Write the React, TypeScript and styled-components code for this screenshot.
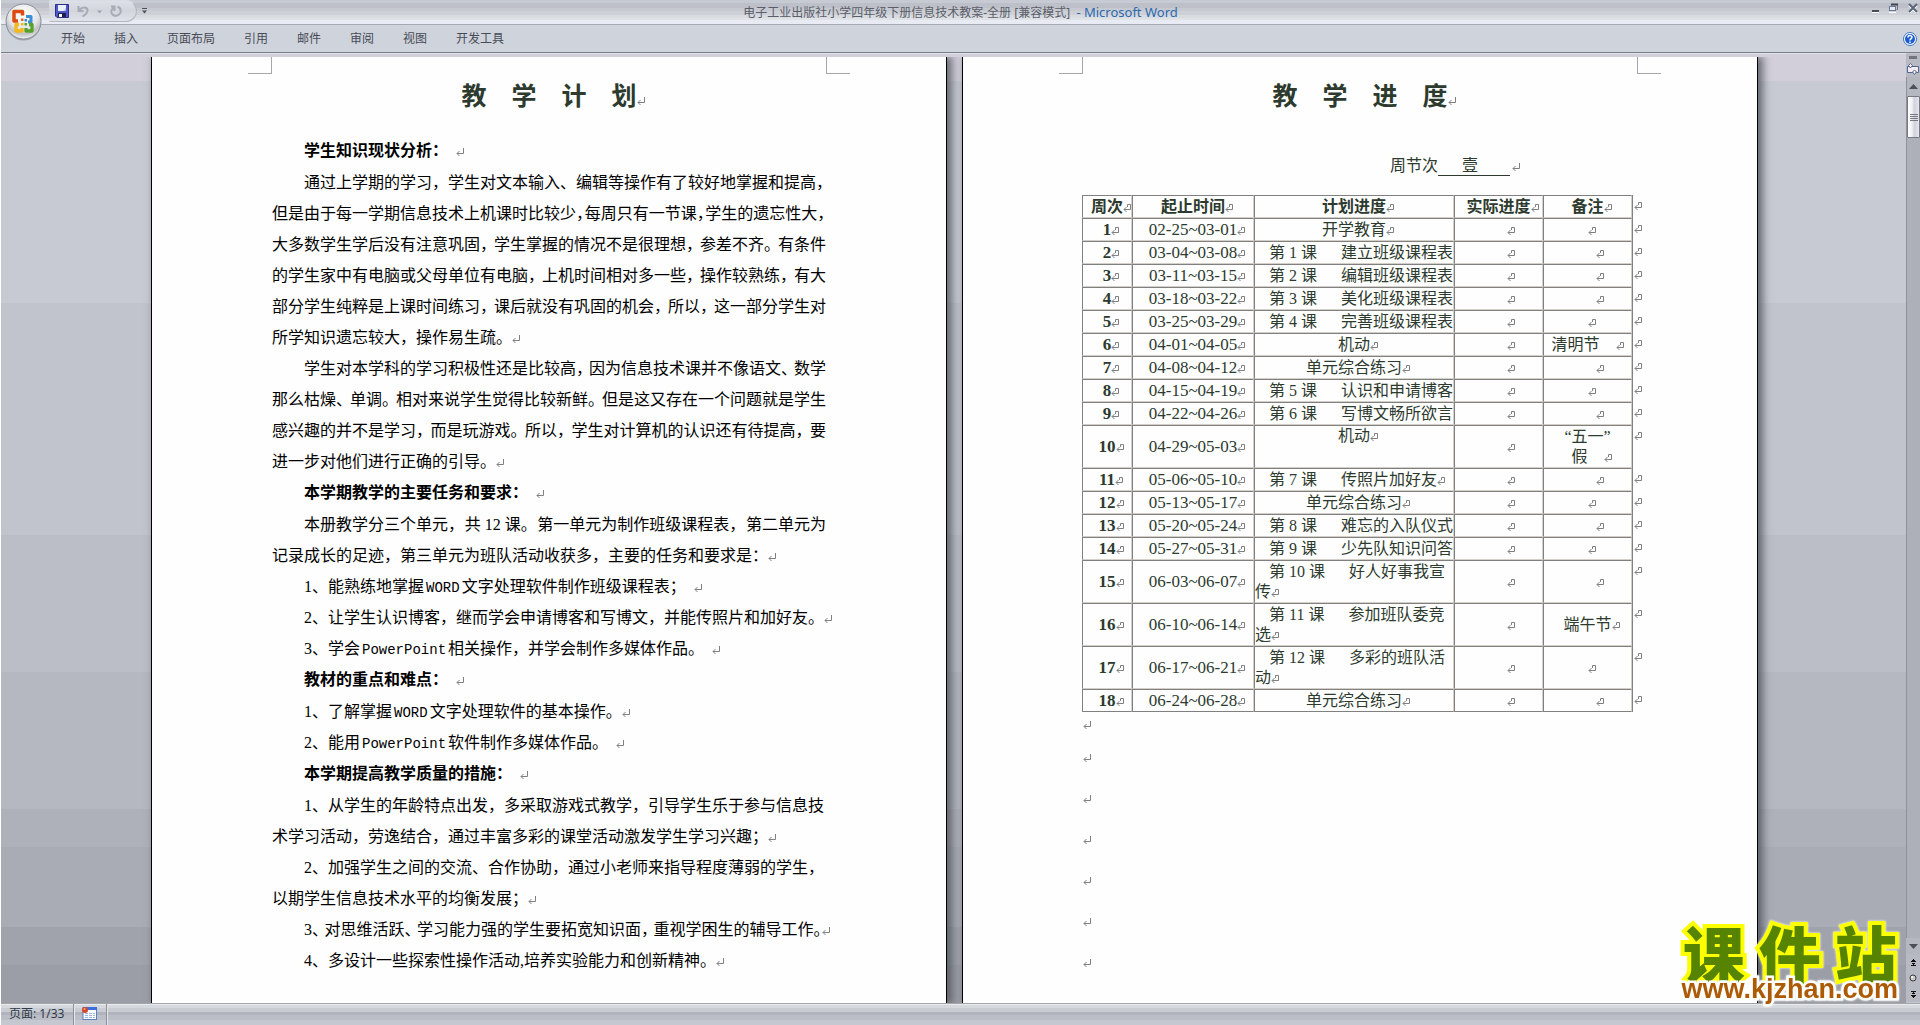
import React from "react";
import styled, { createGlobalStyle, css } from "styled-components";

const GlobalStyle = createGlobalStyle`
  * { box-sizing: border-box; }
  html, body { margin: 0; padding: 0; overflow: hidden; }
  body { background: #d2cfda; }
  button { border: 0; padding: 0; margin: 0; background: none; font: inherit; color: inherit; }
`;

const uiFont = `"Noto Sans", "Noto Sans CJK SC", sans-serif`;
const docFont = `"Liberation Serif", "Noto Sans CJK SC", serif`;
const ink = "#2d3a2e";

/* ---------- window frame ---------- */

const Window = styled.div`
  position: relative;
  display: grid;
  grid-template-rows: auto auto minmax(0, 1fr) auto;
  height: 100vh;
  border-left: 1px solid #ffffff;
  font-family: ${uiFont};
  font-size: 12px;
`;

const TitleBar = styled.header`
  display: grid;
  grid-template-columns: 1fr auto 1fr;
  align-items: start;
  height: 25px;
  border-bottom: 1px solid #a7aab2;
  background: linear-gradient(
    #c6cad3 0 3px, #bdc0c8 3px 8px, #c6c9d0 8px 11px, #cdd0d7 11px 15px,
    #d8dbe0 15px 18px, #dfe3e6 18px 20px, #e8ebf3 20px
  );
`;

const QuickAccess = styled.div`
  display: flex;
  align-items: center;
  width: 88px;
  height: 22px;
  margin-left: 48px;
  padding-left: 5px;
  gap: 8px;
  border: 1px solid #b3b7c0;
  border-top-color: #d9dce4;
  border-left-color: transparent;
  border-radius: 0 11px 11px 0;
  background: linear-gradient(#dcdfe6, #d2d5dc 50%, #dfe2e8);
`;

const QuickRow = styled.div`
  display: flex;
  align-items: center;
  gap: 5px;
`;

const IconButton = styled.button`
  display: flex;
  align-items: center;
  justify-content: center;
`;

const OfficeButton = styled.button`
  position: absolute;
  left: 3px;
  top: 2px;
  width: 38px;
  height: 39px;
`;

const Caption = styled.h1`
  margin: 0;
  padding-top: 3px;
  font-size: 12px;
  line-height: 18px;
  font-weight: 400;
  color: #5b5e68;
  white-space: pre;
`;

const AppName = styled.span`
  color: #2c69ae;
  font-size: 13px;
`;

const WindowButtons = styled.div`
  display: flex;
  justify-content: flex-end;
  gap: 9px;
  padding: 3px 2px 0 0;
`;

const Tabs = styled.nav`
  display: flex;
  align-items: center;
  height: 28px;
  padding: 0 3px 0 60px;
  gap: 29px;
  background: #cfd3dc;
  border-bottom: 1px solid #7b7f87;
  box-shadow: 0 1px 0 #dfe1e6;
  color: #474b56;
  line-height: 26px;
`;

const HelpButton = styled.button`
  display: flex;
  margin-left: auto;
`;

/* ---------- document area ---------- */

const Body = styled.div`
  display: grid;
  grid-template-columns: minmax(0, 1fr) 14px;
  min-height: 0;
`;

const Workspace = styled.main`
  display: flex;
  justify-content: center;
  gap: 15px;
  margin-top: 4px;
  padding-left: 2px;
  min-height: 0;
  overflow: hidden;
  background: linear-gradient(
    #d2cfda 0 2.5%, #c7cad3 2.5% 26%, #c1c4cd 26% 50.5%, #bbbec7 50.5% 65%,
    #b5b8c1 65% 79.5%, #aeb1ba 79.5% 83.5%, #a9acb5 83.5% 92%,
    #a0a3ab 92% 96%, #9b9ea6 96%
  );
`;

const Page = styled.article`
  position: relative;
  flex: none;
  width: 796px;
  padding: 22px 120px 0;
  border: solid #000000;
  border-width: 0 1px;
  background: #fefefe;
  box-shadow: 4px 0 8px 1px rgba(70, 74, 82, 0.75);
  font-family: ${docFont};
  font-size: 16px;
  color: #000000;
`;

const CropMark = styled.i<{ $side: "left" | "right" }>`
  position: absolute;
  top: 0;
  ${(p) => p.$side}: 96px;
  width: 24px;
  height: 17px;
  border-bottom: 1px solid #a6a5b0;
  ${(p) => (p.$side === "left" ? "border-right" : "border-left")}: 1px solid #a6a5b0;
`;

const PageTitle = styled.h2<{ $gap: number }>`
  margin: 0 0 ${(p) => p.$gap}px;
  font-size: 25px;
  line-height: 36px;
  font-weight: 700;
  text-align: center;
  color: ${ink};
`;

const SectionHeading = styled.h3`
  margin: 0;
  padding-left: 32px;
  font-size: 16px;
  line-height: 32px;
  font-weight: 700;
`;

const Paragraph = styled.p`
  margin: 0;
  line-height: 31px;
`;

const Line = styled.span<{ $indent?: boolean }>`
  display: block;
  padding-left: ${(p) => (p.$indent ? 32 : 0)}px;
  white-space: pre;
`;

const SpreadLine = styled(Line)`
  display: flex;
`;

const Punct = styled.span`
  flex: 1 1 8px;
  font-feature-settings: "halt";
`;

const Latin = styled.span`
  margin: 0 2px;
  font-family: "Liberation Mono", monospace;
  font-size: 14px;
  line-height: 1;
`;

const Digits = styled.span`
  margin: 0 4px;
`;

const markBox = css`
  display: inline-block;
  width: 8px;
  height: 8px;
  margin-right: -8px;
  fill: none;
  stroke: #808080;
`;

const MarkSvg = styled.svg<{ $gap?: number }>`
  ${markBox}
  margin-left: ${(p) => p.$gap ?? 0}px;
`;

const ParaMark = ({ gap }: { gap?: number }) => (
  <MarkSvg viewBox="0 0 8 8" $gap={gap} aria-hidden="true">
    <path d="M7.5 0V5.5H1M3.5 3L1 5.5L3.5 8" />
  </MarkSvg>
);

const CellMark = ({ gap }: { gap?: number }) => (
  <MarkSvg viewBox="0 0 8 8" $gap={gap} aria-hidden="true">
    <path d="M4.5 3V0.5H7.5V5.5H1M3.5 3L1 5.5L3.5 8" />
  </MarkSvg>
);

/* A full-width line: the punctuation takes up whatever room the characters leave. */
const Spread = ({ text, indent, mark }: { text: string; indent?: boolean; mark?: boolean }) => (
  <SpreadLine $indent={indent}>
    {text.split(/([，。、])/).filter(Boolean).map((part, i) =>
      /^[，。、]$/.test(part) ? <Punct key={i}>{part}{mark && part === "。" && <ParaMark />}</Punct> : withLatin(part, i)
    )}
  </SpreadLine>
);

const withLatin = (text: string, key: number | string = 0) => (
  <span key={key}>
    {text.split(/(WORD|PowerPoint|12)/).map((part, i) =>
      part === "12" ? <Digits key={i}>{part}</Digits>
        : /^(WORD|PowerPoint)$/.test(part) ? <Latin key={i}>{part}</Latin>
          : part
    )}
  </span>
);

const Plain = ({ text, indent, mark, gap }: { text: string; indent?: boolean; mark?: boolean; gap?: number }) => (
  <Line $indent={indent}>
    {withLatin(text)}
    {mark && <ParaMark gap={gap} />}
  </Line>
);

const Heading = ({ children }: { children: string }) => (
  <SectionHeading>{children}<ParaMark gap={8} /></SectionHeading>
);

/* ---------- schedule ---------- */

const PeriodLine = styled.p`
  margin: 0 0 17px;
  padding-right: 125px;
  line-height: 24px;
  text-align: right;
  white-space: pre;
  color: ${ink};
`;

const Blank = styled.span`
  display: inline-block;
  padding: 0 32px 0 24px;
  line-height: 18px;
  border-bottom: 1px solid ${ink};
`;

const Schedule = styled.table`
  width: 562px;
  margin-left: -1px;
  table-layout: fixed;
  border-spacing: 0;
  color: ${ink};
  line-height: 20px;
  text-align: center;
`;

const Row = styled.tr<{ $tall?: boolean }>`
  height: ${(p) => (p.$tall ? 43 : 23)}px;
`;

const cellEdges = css`
  padding: 0;
  border: 1px solid #d4d0c8;
  border-left-color: #808080;
  border-top-color: #808080;
  white-space: nowrap;
  tr:last-child > & { border-bottom-color: #808080; }
`;

const HeadCell = styled.th`
  ${cellEdges}
  font-weight: 700;
`;

const WeekCell = styled.th`
  ${cellEdges}
  font-size: 17px;
  font-weight: 700;
`;

const Cell = styled.td<{ $wrap?: boolean; $top?: boolean; $lesson?: boolean }>`
  ${cellEdges}
  ${(p) => p.$wrap && css`white-space: normal;`}
  ${(p) => p.$top && css`vertical-align: top;`}
  ${(p) => p.$lesson && css`text-align: left; text-indent: 14px;`}
`;

const DateCell = styled(Cell)`
  font-size: 17px;
`;

const EndCell = styled.td`
  padding: 0 0 0 1px;
  border-left: 1px solid #808080;
  vertical-align: top;
  text-align: left;
`;

const LessonTitle = styled.span`
  margin-left: 24px;
`;

const EmptyLine = styled.p<{ $first?: boolean }>`
  margin: 0;
  line-height: ${(p) => (p.$first ? 24 : 41)}px;
`;

type Plan = { text: string; lesson?: number; top?: boolean };
type Entry = { date: string; plan: Plan; note?: React.ReactNode; tall?: boolean };

const near = <CellMark />;
const far = <CellMark gap={16} />;

const entries: Entry[] = [
  { date: "02-25~03-01", plan: { text: "开学教育" }, note: near },
  { date: "03-04~03-08", plan: { lesson: 1, text: "建立班级课程表" }, note: far },
  { date: "03-11~03-15", plan: { lesson: 2, text: "编辑班级课程表" }, note: far },
  { date: "03-18~03-22", plan: { lesson: 3, text: "美化班级课程表" }, note: far },
  { date: "03-25~03-29", plan: { lesson: 4, text: "完善班级课程表" }, note: near },
  { date: "04-01~04-05", plan: { text: "机动" }, note: <>清明节<CellMark gap={16} />&nbsp;&nbsp;</> },
  { date: "04-08~04-12", plan: { text: "单元综合练习" }, note: far },
  { date: "04-15~04-19", plan: { lesson: 5, text: "认识和申请博客" }, note: near },
  { date: "04-22~04-26", plan: { lesson: 6, text: "写博文畅所欲言" }, note: far },
  { date: "04-29~05-03", plan: { text: "机动", top: true }, note: <>“五一”<br />假<CellMark gap={16} /></>, tall: true },
  { date: "05-06~05-10", plan: { lesson: 7, text: "传照片加好友" }, note: far },
  { date: "05-13~05-17", plan: { text: "单元综合练习" }, note: near },
  { date: "05-20~05-24", plan: { lesson: 8, text: "难忘的入队仪式" }, note: far },
  { date: "05-27~05-31", plan: { lesson: 9, text: "少先队知识问答" }, note: near },
  { date: "06-03~06-07", plan: { lesson: 10, text: "好人好事我宣传" }, note: far, tall: true },
  { date: "06-10~06-14", plan: { lesson: 11, text: "参加班队委竞选" }, note: <>端午节<CellMark /></>, tall: true },
  { date: "06-17~06-21", plan: { lesson: 12, text: "多彩的班队活动" }, note: near, tall: true },
  { date: "06-24~06-28", plan: { text: "单元综合练习" }, note: far },
];

const PlanCell = ({ plan, tall }: { plan: Plan; tall?: boolean }) =>
  plan.lesson ? (
    <Cell $lesson $wrap={tall}>
      第<Digits>{plan.lesson}</Digits>课<LessonTitle>{plan.text}</LessonTitle>
      {(tall || plan.text.length < 7) && <CellMark />}
    </Cell>
  ) : (
    <Cell $top={plan.top}>{plan.text}<CellMark /></Cell>
  );

const ScheduleTable = () => (
  <Schedule>
    <colgroup>
      <col width="50" /><col width="122" /><col width="200" /><col width="89" /><col width="89" /><col width="12" />
    </colgroup>
    <tbody>
      <Row>
        {["周次", "起止时间", "计划进度", "实际进度", "备注"].map((name) => (
          <HeadCell key={name} scope="col">{name}<CellMark /></HeadCell>
        ))}
        <EndCell><CellMark /></EndCell>
      </Row>
      {entries.map((entry, i) => (
        <Row key={entry.date} $tall={entry.tall}>
          <WeekCell scope="row">{i + 1}<CellMark /></WeekCell>
          <DateCell>{entry.date}<CellMark /></DateCell>
          <PlanCell plan={entry.plan} tall={entry.tall} />
          <Cell><CellMark gap={16} /></Cell>
          <Cell>{entry.note}</Cell>
          <EndCell><CellMark /></EndCell>
        </Row>
      ))}
    </tbody>
  </Schedule>
);

/* ---------- scroll bar ---------- */

const ScrollColumn = styled.div`
  display: flex;
  flex-direction: column;
  align-items: stretch;
  padding-top: 1px;
  background: #c3c6cf;
`;

const ScrollButton = styled.button<{ $height: number; $plain?: boolean }>`
  display: flex;
  align-items: center;
  justify-content: center;
  height: ${(p) => p.$height}px;
  background: ${(p) => (p.$plain ? "#b4b7bf" : "#b7bac3")};
`;

const Track = styled.div`
  flex: 1;
  display: flex;
  flex-direction: column;
  border-left: 1px solid #8f929a;
  background: #adb0b8;
`;

const Thumb = styled.div`
  display: flex;
  flex-direction: column;
  align-items: center;
  justify-content: center;
  gap: 1px;
  height: 42px;
  border: 1px solid #767980;
  border-radius: 1px;
  background: linear-gradient(90deg, #ffffff, #f0f1f6 35%, #cfd2dc 60%, #e6e8ef);
`;

const Grip = styled.i`
  width: 8px;
  height: 1px;
  background: #757982;
`;

const PageNav = styled.div`
  display: flex;
  flex-direction: column;
  padding-bottom: 1px;
`;

/* ---------- status bar ---------- */

const StatusBar = styled.footer`
  display: flex;
  align-items: stretch;
  height: 22px;
  border-top: 1px solid #a2a5aa;
  background: linear-gradient(#e9ebef 0 1px, #d5d8dd 1px 4px, #c9ccd3 4px 8px, #b0b3bb 8px 11px, #bbbec6 11px 16px, #c5c8d0 16px);
  color: #2e3a48;
  line-height: 18px;
`;

const StatusItem = styled.button`
  display: flex;
  align-items: center;
  padding: 0 9px 2px 8px;
  border-right: 1px solid #8d9096;
  box-shadow: 1px 0 0 #e4e6ea;
`;

/* ---------- site stamp ---------- */

const Stamp = styled.div`
  position: absolute;
  right: 22px;
  bottom: 24px;
  display: flex;
  flex-direction: column;
  align-items: center;
  filter: drop-shadow(0 0 1px #ffffff);
`;

const StampName = styled.div`
  display: flex;
  gap: 14px;
  font: 900 62px/50px "Noto Sans CJK SC", sans-serif;
  color: #568400;
  -webkit-text-stroke: 8px #fbff00;
  paint-order: stroke fill;
`;

const StampSite = styled.div`
  font: 700 27px/24px "Liberation Sans", sans-serif;
  color: #ad5a04;
  -webkit-text-stroke: 5px #ffffff;
  paint-order: stroke fill;
`;

/* ---------- icons ---------- */

const OfficeLogo = () => (
  <svg width="38" height="39" viewBox="0 0 38 39">
    <defs>
      <radialGradient id="orb" cx="50%" cy="30%" r="70%">
        <stop offset="0" stopColor="#ffffff" />
        <stop offset="0.6" stopColor="#e4e5e8" />
        <stop offset="0.8" stopColor="#bfc1c6" />
        <stop offset="1" stopColor="#f4f5f7" />
      </radialGradient>
    </defs>
    <circle cx="19.5" cy="21" r="17.5" fill="#8b8e95" opacity="0.7" />
    <circle cx="19.5" cy="19.5" r="17.5" fill="url(#orb)" stroke="#8c8f96" />
    <g fill="none" strokeLinejoin="round">
      <path d="M14 19H10V9.500H18.500V13.500" stroke="#dc4c12" strokeWidth="3.500" />
      <path d="M22 14.500H27V20H24" stroke="#3a8fd6" strokeWidth="3" />
      <path d="M15 22.500H12V29H18V26" stroke="#f3b81a" strokeWidth="3.300" />
      <path d="M25 22.500H28V29H22V26" stroke="#58a22c" strokeWidth="3.300" />
    </g>
    <g>
      <rect x="17" y="16.500" width="2.500" height="2.500" fill="#e2661c" />
      <rect x="20.500" y="17" width="2.500" height="2.500" fill="#3a8fd6" />
      <rect x="17" y="21" width="2.500" height="2.500" fill="#f3b81a" />
      <rect x="20.500" y="21" width="2.500" height="2.500" fill="#58a22c" />
    </g>
  </svg>
);

const SaveIcon = () => (
  <svg width="14" height="14" viewBox="0 0 14 14">
    <path d="M0.500 0.500H13.500V13.500H2L0.500 12Z" fill="#4d57c9" stroke="#2d2f86" />
    <rect x="3" y="1" width="8" height="6" fill="#e9f0fb" />
    <path d="M8 7L11 4V7Z" fill="#b4c6e8" />
    <rect x="3" y="9" width="8" height="4" fill="#1d1f4e" />
    <rect x="4" y="10" width="3" height="3" fill="#ffffff" />
  </svg>
);

const UndoIcon = () => (
  <svg width="12" height="12" viewBox="0 0 12 12" fill="none" stroke="#a7abb6" strokeWidth="2">
    <path d="M1.500 1V6H6.500M2 5.500C4 2 10 1.500 10.500 5C10.500 8 8 10 5.500 11.500" />
  </svg>
);

const RedoIcon = () => (
  <svg width="12" height="12" viewBox="0 0 12 12" fill="none" stroke="#a7abb6" strokeWidth="2">
    <path d="M1 1.500H4.500V6M4.500 2C1 4 0.500 7.500 2.500 9.500C5 12 9.500 10.500 10.500 7.500C11 5 10 2.500 7.500 1.500" />
  </svg>
);

const Caret = ({ bar }: { bar?: boolean }) => (
  <svg width="5" height="6" viewBox="0 0 5 6" fill={bar ? "#4d515b" : "#a0a4ae"}>
    {bar && <rect width="5" height="1" />}
    <path d="M0 2.500H5L2.500 5.500Z" />
  </svg>
);

const MinimizeIcon = () => (
  <svg width="8" height="10" viewBox="0 0 8 10">
    <rect x="0" y="7" width="7" height="2" fill="#4a4d55" /><rect x="0" y="9" width="7" height="1" fill="#ffffff" />
  </svg>
);

const RestoreIcon = () => (
  <svg width="10" height="10" viewBox="0 0 10 10" fill="none" stroke="#6b7690">
    <path d="M2.500 2.500V1.500H8.500V6.500H7.500" /><path d="M2 1.500H9" stroke="#43464e" strokeWidth="2" />
    <rect x="0.500" y="3.500" width="6" height="4" fill="#e6e9f0" /><path d="M0 9.500H7" stroke="#ffffff" />
  </svg>
);

const CloseIcon = () => (
  <svg width="10" height="10" viewBox="0 0 10 10" fill="none" strokeWidth="2">
    <path d="M1 2.500L9 10M9 2.500L1 10" stroke="#ffffff" /><path d="M1 1L9 9M9 1L1 9" stroke="#5a6478" />
  </svg>
);

const HelpIcon = () => (
  <svg width="14" height="14" viewBox="0 0 14 14">
    <circle cx="7" cy="7" r="6.500" fill="#ffffff" stroke="#3f74b8" />
    <circle cx="7" cy="7" r="5" fill="#1c5bd0" />
    <path d="M5 5.500C5 3 9 3 9 5.300C9 6.800 7 6.600 7 8.500M7 9.500V11" fill="none" stroke="#ffffff" strokeWidth="1.500" />
  </svg>
);

const RulerIcon = () => (
  <svg width="12" height="12" viewBox="0 0 12 12" fill="#f3ecf6" stroke="#52688a">
    <path d="M0.500 3.500H11.500V9.500H0.500Z" />
    <path d="M1.500 2.500L3.500 0.500L5.500 2.500L3.500 5Z" />
    <path d="M5.500 9L7.500 7L9.500 9L7.500 11.500Z" />
  </svg>
);

const ArrowIcon = ({ down }: { down?: boolean }) => (
  <svg width="9" height="5" viewBox="0 0 9 5" fill="#4b4f58">
    <path d={down ? "M0 0H9L4.500 5Z" : "M0 5H9L4.500 0Z"} />
  </svg>
);

const PageStepIcon = ({ down }: { down?: boolean }) => (
  <svg width="5" height="7" viewBox="0 0 5 7" fill="none" stroke="#111111">
    {down
      ? <path d="M0 0.500H5M1 2.500H4M2.500 0V3M0 4.500H5M1 5.500H4M2.500 5V7" />
      : <path d="M2.500 0V2M1 1.500H4M0 2.500H5M2.500 4V6M1 4.500H4M0 6.500H5" />}
  </svg>
);

const BrowseIcon = () => (
  <svg width="8" height="8" viewBox="0 0 8 8">
    <circle cx="4" cy="4" r="3" fill="#c9cbc8" stroke="#3b3c3e" /><circle cx="3" cy="3" r="1" fill="#ffffff" />
  </svg>
);

const MacroIcon = () => (
  <svg width="15" height="13" viewBox="0 0 15 13">
    <rect x="1" y="0.500" width="13.500" height="12" fill="#f6f9ff" stroke="#5a7fc0" />
    <rect x="1" y="0" width="14" height="3" fill="#3a70d8" />
    <path d="M3 6.500H13M3 8.500H13M3 10.500H13" stroke="#9db6e0" strokeDasharray="3 1" />
    <circle cx="3" cy="3" r="3" fill="#d5482a" /><circle cx="2.500" cy="2" r="1" fill="#f4a48e" />
  </svg>
);

const tabs = ["开始", "插入", "页面布局", "引用", "邮件", "审阅", "视图", "开发工具"];

export default function App() {
  return (
    <Window>
      <GlobalStyle />
      <TitleBar>
        <QuickRow>
          <QuickAccess>
            <IconButton aria-label="保存"><SaveIcon /></IconButton>
            <IconButton aria-label="撤消"><UndoIcon /></IconButton>
            <Caret />
            <IconButton aria-label="恢复"><RedoIcon /></IconButton>
          </QuickAccess>
          <IconButton aria-label="自定义快速访问工具栏"><Caret bar /></IconButton>
        </QuickRow>
        <Caption>电子工业出版社小学四年级下册信息技术教案-全册 [兼容模式]  <AppName>- Microsoft Word</AppName></Caption>
        <WindowButtons>
          <IconButton aria-label="最小化"><MinimizeIcon /></IconButton>
          <IconButton aria-label="还原"><RestoreIcon /></IconButton>
          <IconButton aria-label="关闭"><CloseIcon /></IconButton>
        </WindowButtons>
      </TitleBar>
      <Tabs>
        {tabs.map((tab) => <button key={tab}>{tab}</button>)}
        <HelpButton aria-label="帮助"><HelpIcon /></HelpButton>
      </Tabs>
      <OfficeButton aria-label="Office"><OfficeLogo /></OfficeButton>

      <Body>
        <Workspace>
          <Page>
            <CropMark $side="left" />
            <CropMark $side="right" />
            <PageTitle $gap={20}>教　学　计　划<ParaMark /></PageTitle>
            <Heading>学生知识现状分析：</Heading>
            <Paragraph>
              <Plain indent text="通过上学期的学习，学生对文本输入、编辑等操作有了较好地掌握和提高，" />
              <Spread text="但是由于每一学期信息技术上机课时比较少，每周只有一节课，学生的遗忘性大，" />
              <Spread text="大多数学生学后没有注意巩固，学生掌握的情况不是很理想，参差不齐。有条件" />
              <Spread text="的学生家中有电脑或父母单位有电脑，上机时间相对多一些，操作较熟练，有大" />
              <Spread text="部分学生纯粹是上课时间练习，课后就没有巩固的机会，所以，这一部分学生对" />
              <Plain mark text="所学知识遗忘较大，操作易生疏。" />
            </Paragraph>
            <Paragraph>
              <Spread indent text="学生对本学科的学习积极性还是比较高，因为信息技术课并不像语文、数学" />
              <Spread text="那么枯燥、单调。相对来说学生觉得比较新鲜。但是这又存在一个问题就是学生" />
              <Spread text="感兴趣的并不是学习，而是玩游戏。所以，学生对计算机的认识还有待提高，要" />
              <Plain mark text="进一步对他们进行正确的引导。" />
            </Paragraph>
            <Heading>本学期教学的主要任务和要求：</Heading>
            <Paragraph>
              <Spread indent text="本册教学分三个单元，共12课。第一单元为制作班级课程表，第二单元为" />
              <Plain mark text="记录成长的足迹，第三单元为班队活动收获多，主要的任务和要求是：" />
            </Paragraph>
            <Paragraph><Plain indent mark gap={8} text="1、能熟练地掌握WORD文字处理软件制作班级课程表；" /></Paragraph>
            <Paragraph><Plain indent mark text="2、让学生认识博客，继而学会申请博客和写博文，并能传照片和加好友。" /></Paragraph>
            <Paragraph><Plain indent mark gap={8} text="3、学会PowerPoint相关操作，并学会制作多媒体作品。" /></Paragraph>
            <Heading>教材的重点和难点：</Heading>
            <Paragraph><Plain indent mark text="1、了解掌握WORD文字处理软件的基本操作。" /></Paragraph>
            <Paragraph><Plain indent mark gap={8} text="2、能用PowerPoint软件制作多媒体作品。" /></Paragraph>
            <Heading>本学期提高教学质量的措施：</Heading>
            <Paragraph>
              <Plain indent text="1、从学生的年龄特点出发，多采取游戏式教学，引导学生乐于参与信息技" />
              <Plain mark text="术学习活动，劳逸结合，通过丰富多彩的课堂活动激发学生学习兴趣；" />
            </Paragraph>
            <Paragraph>
              <Plain indent text="2、加强学生之间的交流、合作协助，通过小老师来指导程度薄弱的学生，" />
              <Plain mark text="以期学生信息技术水平的均衡发展；" />
            </Paragraph>
            <Paragraph><Spread indent mark text="3、对思维活跃、学习能力强的学生要拓宽知识面，重视学困生的辅导工作。" /></Paragraph>
            <Paragraph><Plain indent mark text="4、多设计一些探索性操作活动,培养实验能力和创新精神。" /></Paragraph>
          </Page>

          <Page>
            <CropMark $side="left" />
            <CropMark $side="right" />
            <PageTitle $gap={39}>教　学　进　度<ParaMark /></PageTitle>
            <PeriodLine>周节次<Blank>壹</Blank><ParaMark gap={2} /></PeriodLine>
            <ScheduleTable />
            <EmptyLine $first><ParaMark /></EmptyLine>
            {[1, 2, 3, 4, 5, 6].map((n) => <EmptyLine key={n}><ParaMark /></EmptyLine>)}
          </Page>
        </Workspace>

        <ScrollColumn>
          <ScrollButton $height={7} aria-label="拆分">
            <svg width="8" height="3"><rect width="8" height="3" fill="#72757c" /></svg>
          </ScrollButton>
          <ScrollButton $height={16} aria-label="标尺"><RulerIcon /></ScrollButton>
          <Track>
            <ScrollButton $height={19} $plain aria-label="向上滚动"><ArrowIcon /></ScrollButton>
            <Thumb><Grip /><Grip /><Grip /><Grip /></Thumb>
          </Track>
          <ScrollButton $height={16} $plain aria-label="向下滚动"><ArrowIcon down /></ScrollButton>
          <PageNav>
            <ScrollButton $height={16} aria-label="前一页"><PageStepIcon /></ScrollButton>
            <ScrollButton $height={16} aria-label="选择浏览对象"><BrowseIcon /></ScrollButton>
            <ScrollButton $height={16} aria-label="下一页"><PageStepIcon down /></ScrollButton>
          </PageNav>
        </ScrollColumn>
      </Body>

      <StatusBar>
        <StatusItem>页面: 1/33</StatusItem>
        <StatusItem aria-label="录制宏"><MacroIcon /></StatusItem>
      </StatusBar>

      <Stamp>
        <StampName><span>课</span><span>件</span><span>站</span></StampName>
        <StampSite>www.kjzhan.com</StampSite>
      </Stamp>
    </Window>
  );
}
